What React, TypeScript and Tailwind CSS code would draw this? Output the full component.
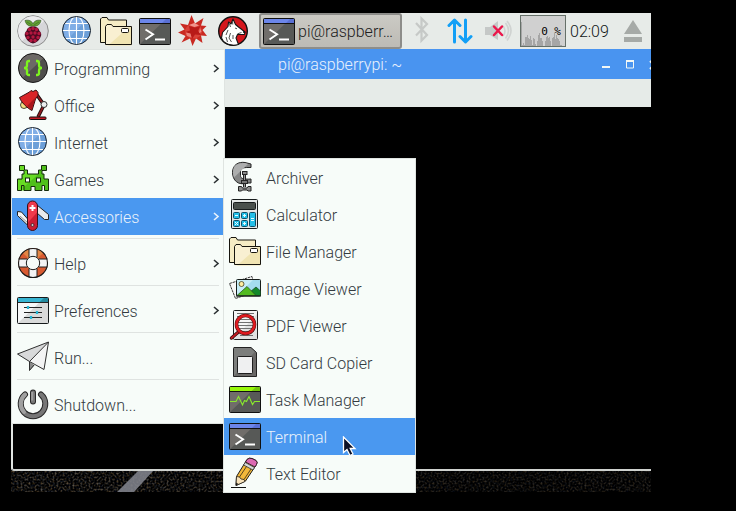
import type { ReactNode } from "react";

const FONT = "font-['Roboto','Noto_Sans',sans-serif]";

function Svg({ children }: { children: ReactNode }) {
  return (
    <svg viewBox="0 0 32 32" width="32" height="32" className="block shrink-0 overflow-visible">
      {children}
    </svg>
  );
}

function GlobeIcon() {
  return (
    <Svg>
      <circle cx="15.5" cy="15.5" r="14" fill="#6c9fd8" />
      <path d="M1.500 15.500A14 14 0 0 1 25 5.500L6 25Z" fill="#80aee6" />
      <g fill="none" stroke="#fff" strokeWidth="1.1">
        <ellipse cx="15.500" cy="15.500" rx="7.500" ry="14" />
        <path d="M15.500 1.500v28M1.500 15.500h28M4 8.500h23M4 23.500h23" />
      </g>
      <circle cx="15.5" cy="15.5" r="14" fill="none" stroke="#17202a" />
    </Svg>
  );
}

function FoldersIcon() {
  return (
    <Svg>
      <path d="M.5 27.500V4l1.500-1.500h5L8.500 5H26.500v22.500H1Z" fill="#f6ecc4" stroke="#17150e" />
      <path d="M5.500 30.500V11.500L7 9.500h5l1.500 2H31.500v17.500l-1 1Z" fill="#f9f0d2" />
      <path d="M8 30.500L29 12h2.500v18.500Z" fill="#f0e4b2" />
      <path d="M5.500 29.500V11.500L7 9.500h4.500l1.500 2H31.500V29.500Z" fill="none" stroke="#17150e" />
      <rect x="21.500" y="13.500" width="7" height="4" rx="1" fill="#fff" stroke="#17150e" />
    </Svg>
  );
}

function TerminalIcon() {
  return (
    <Svg>
      <rect x=".5" y="3.500" width="31" height="26" rx="1" fill="#575957" />
      <path d="M1 29L27 4H1Z" fill="#706d6a" />
      <path d="M1 4h30v5H1Z" fill="#5a70d4" />
      <path d="M1 4h26l-5 5H1Z" fill="#6c86ea" />
      <rect x=".5" y="3.500" width="31" height="26" rx="1" fill="none" stroke="#101010" />
      <path d="M1 8.500h30" stroke="#101010" />
      <path d="M6.500 14.500l7.500 4.700l-7.500 5.300" fill="none" stroke="#fff" strokeWidth="2" />
      <path d="M16 24.500h10" stroke="#fff" strokeWidth="2" />
    </Svg>
  );
}

function RaspberryIcon() {
  const drupelets = [
    [12.5, 14.5], [16, 13.5], [19.5, 14.5], [10, 18.5], [14, 18], [18, 18], [22, 18.5], [11, 22.5], [16, 22], [21, 22.5], [14, 25.5], [18, 25.5],
  ];
  return (
    <Svg>
      <circle cx="16" cy="16" r="15.300" fill="#d6d6d9" stroke="#8b8b8b" />
      <path d="M5 26A14.800 14.800 0 0 1 27 6Z" fill="#ececee" />
      <path d="M16 11C11 12 9 9 8 5.500C12 4.500 15 6 16 9C17 6 20 4.500 24 5.500C23 9 21 12 16 11Z" fill="#64a034" stroke="#2d4f1e" strokeWidth=".6" />
      <path d="M10 7l5 3M22 7l-5 3" stroke="#3b6a22" strokeWidth=".6" />
      <path d="M16 11.500C21 11.500 22 14 22.500 16C25 18 24.500 21 23 23C22 26 19 27.500 16 28.500C13 27.500 10 26 9 23C7.500 21 7 18 9.500 16C10 14 11 11.500 16 11.500Z" fill="#4d0a22" />
      {drupelets.map(([x, y]) => (
        <circle key={`${x}-${y}`} cx={x} cy={y} r="1.700" fill="#b3163f" />
      ))}
    </Svg>
  );
}

function SpikeyIcon() {
  return (
    <Svg>
      <path d="M13.500 0l3.500 8.500L25.500 3l-2.500 7.500l5.500 .5l-4 4L29 21l-6-.5L24.500 28l-6.500-4.500L14.500 31l-2.500-7.500L3.500 27.500l4-6.500L0 17.500L6.500 14.500L2 8.500l8 1.500Z" fill="#c92a22" />
      <path d="M10 10.500l6.500-2.500l6 3l1.500 5l-1 4.500l-5 3l-6-.5L7.500 20L7 14.500Z" fill="#d94138" />
      <path d="M11 11l6 1.500l5.500-1.500l-2.500 5l3 4l-6-.5l-3 4.500l-1.500-5l-5-2l4.500-1.500Z" fill="#b81a18" />
      <path d="M11 10l5.500-2l4.500 2.500l-4.500 1.500Z" fill="#f0958d" />
      <path d="M8 17.500l4.500 1l1 4l-4.500-1.500Z" fill="#e98078" />
      <path d="M22 13l1.500 4l-2.500 1Z" fill="#f08c84" />
    </Svg>
  );
}

function WolfIcon() {
  return (
    <Svg>
      <circle cx="16" cy="16" r="14.300" fill="#d4161c" stroke="#111" strokeWidth="1.400" />
      <path d="M16 4L18.500 9.500L21.500 12L28 17L27.500 19.500L20.500 19.500L19 23L21.500 29.500C16 31 10 29.500 6.500 26.500L4.500 23L5.500 17.500L11 11.500L11.500 7L14 9Z" fill="#fff" stroke="#161616" strokeWidth="1.100" strokeLinejoin="round" />
      <path d="M15.500 6.500l.3 3M12.500 9l1 3M18 13l2 .8M24.500 17.500l-4 1.300M11 15l-2 5M13.500 18l-1.500 5l2.500 4M16 20l0 4M9 22l1.500 5" fill="none" stroke="#222" strokeWidth=".8" />
      <path d="M26.500 15.500l2 1.500l-1 1.500l-1.500-1Z" fill="#171717" />
    </Svg>
  );
}

function ProgrammingIcon() {
  return (
    <Svg>
      <circle cx="16" cy="16" r="14.500" fill="#4f4e4c" />
      <path d="M5.500 26A14.500 14.500 0 0 1 26.500 6Z" fill="#6c6966" />
      <circle cx="16" cy="16" r="14.500" fill="none" stroke="#191919" />
      <path d="M13 9h-1q-2 0-2 2v2.500q0 2.500-3 2.500q3 0 3 2.500V21q0 2 2 2H13M19 9h1q2 0 2 2v2.500q0 2.500 3 2.500q-3 0-3 2.500V21q0 2-2 2H19" fill="none" stroke="#7df51e" strokeWidth="2.300" />
    </Svg>
  );
}

function OfficeIcon() {
  return (
    <Svg>
      <path d="M20 6l7 10l-6 12" fill="none" stroke="#1b0b0b" strokeWidth="3.500" />
      <path d="M20 6l7 10l-6 12" fill="none" stroke="#8e1b20" strokeWidth="1.700" />
      <circle cx="7" cy="16" r="3.500" fill="#f3df83" stroke="#242017" strokeWidth=".8" />
      <path d="M2.500 8.500L12.500 3L14 1.500L16 2.500L19 1l2 2.500v3L18.500 10L15 21.500C10 19 4 13 2.500 8.500Z" fill="#d92528" stroke="#351010" />
      <path d="M20.500 6.500L18 10L14.800 20.500L10 17Z" fill="#a9171d" />
      <circle cx="27" cy="15.500" r="3" fill="#eceff0" stroke="#333" />
      <rect x="12.500" y="28" width="16.500" height="2.500" rx=".8" fill="#c51a25" stroke="#190c0c" />
    </Svg>
  );
}

function GamesIcon() {
  const d =
    "M2.500 2.500h5v4.500h3v4h11v-4h3V2.500h5v5h-4.500v3.500h2v5h4.500v11.500h-4v-5h-2.500v5h-7v-4h-4v4h-7v-5h-2.500v5H.5V16h4.500v-5h2V7.500H2.500Z";
  return (
    <Svg>
      <path d={d} fill="#4fc01a" />
      <path d="M3 3h4v4h3v4.500h11L8 23H7v4.500H1V16.500h4.500v-5h2V7H3Z" fill="#68dc24" />
      <path d={d} fill="none" stroke="#152b0c" />
      <rect x="8.500" y="15" width="4" height="4" fill="#fff" stroke="#152b0c" />
      <rect x="19.500" y="15" width="4" height="4" fill="#fff" stroke="#152b0c" />
    </Svg>
  );
}

function KnifeIcon() {
  return (
    <Svg>
      <path d="M.5 11.500L4.500 12l7 8v6L.5 15.500Z" fill="#f5f5f5" stroke="#222" />
      <path d="M3 16l8 7" stroke="#999" />
      <path d="M20 5l11.500 9.500v5h-4L20 13Z" fill="#e8e9eb" stroke="#222" />
      <rect x="10.500" y="1" width="10" height="29.500" rx="5" fill="#ef3a4c" />
      <path d="M20.500 12L10.500 23v2.500a5 5 0 0 0 10 0Z" fill="#cb1d32" />
      <rect x="10.500" y="1" width="10" height="29.500" rx="5" fill="none" stroke="#351017" />
      <path d="M15.500 5v6M12.500 8h6" stroke="#fff" strokeWidth="2" />
      <circle cx="15.500" cy="25" r="1.500" fill="#c9c9c9" stroke="#3d1a20" strokeWidth=".8" />
    </Svg>
  );
}

function HelpIcon() {
  return (
    <Svg>
      <circle cx="16" cy="16" r="10.700" fill="none" stroke="#d95b31" strokeWidth="8" />
      <path d="M8.500 8.500A10.700 10.700 0 0 1 23.500 8.500" fill="none" stroke="#e38645" strokeWidth="8" />
      <path d="M12 2h8v8h-8ZM12 22h8v8h-8ZM2 12h8v8H2ZM22 12h8v8h-8Z" fill="#f3f3f3" />
      <path d="M12 1.500v8.500M20 1.500v8.500M12 22v8.500M20 22v8.500M1.500 12H10M1.500 20H10M22 12h8.500M22 20h8.500" stroke="#222" />
      <circle cx="16" cy="16" r="14.500" fill="none" stroke="#1c1c1c" strokeWidth="1.100" />
      <circle cx="16" cy="16" r="6.700" fill="#f7fcf9" stroke="#1c1c1c" />
    </Svg>
  );
}

function PreferencesIcon() {
  return (
    <Svg>
      <rect x=".5" y="3.500" width="31" height="26" rx="1" fill="#d9dada" />
      <path d="M1 29L27 4H1Z" fill="#f7f9f9" />
      <path d="M1 4h30v4.500H1Z" fill="#23899e" />
      <path d="M1 4h26l-5 4.500H1Z" fill="#37b5d2" />
      <rect x=".5" y="3.500" width="31" height="26" rx="1" fill="none" stroke="#15191b" />
      <path d="M1 8.500h30M7 13.500h18M7 18.500h18M7 23.500h18" stroke="#252525" />
      <path d="M11 12v3M20 17v3M14 22v3" stroke="#24b6d3" strokeWidth="2.300" />
    </Svg>
  );
}

function PlaneIcon() {
  return (
    <Svg>
      <path d="M.5 13L31.500 1L12 20.500Z" fill="#d8d9da" />
      <path d="M31.500 1L27 28.500L12.500 20.500Z" fill="#f3f4f4" />
      <path d="M12.500 20.500V29.500l5-5Z" fill="#898989" />
      <path d="M.5 13L31.500 1L27 28.500L12.500 20.500ZM31.500 1L12.500 20.500V29.500l4.500-5.500" fill="none" stroke="#303030" strokeLinejoin="round" />
    </Svg>
  );
}

function PowerIcon() {
  return (
    <Svg>
      <path d="M8 6.500A12.300 12.300 0 1 0 24 6.500" fill="none" stroke="#292929" strokeWidth="6" strokeLinecap="round" />
      <path d="M8 6.500A12.300 12.300 0 1 0 24 6.500" fill="none" stroke="#777777" strokeWidth="4" strokeLinecap="round" />
      <path d="M8 6.500A12.300 12.300 0 0 0 7 24" fill="none" stroke="#a0a0a0" strokeWidth="4" strokeLinecap="round" />
      <path d="M16 4.500v9" stroke="#292929" strokeWidth="6" strokeLinecap="round" />
      <path d="M16 4.500v9" stroke="#777" strokeWidth="4" strokeLinecap="round" />
      <path d="M15.200 4v8.500" stroke="#a0a0a0" strokeWidth="2" />
    </Svg>
  );
}

function ArchiverIcon() {
  return (
    <Svg>
      <path d="M22 3V6.500H19C14 6.500 11.500 7.500 11.500 10V14.500C11.500 17.500 14 18.500 22 18V22H18C9 25 3.500 19 3.500 11.500C3.500 3.500 10 .5 16 1.500Z" fill="#858686" stroke="#252525" />
      <path d="M4 11C4 4 9 1.500 16 2L19 3L5 16.500C4 14 4 13 4 11Z" fill="#adaeae" />
      <path d="M14.500 13v13M16.500 13v13" stroke="#252525" />
      <path d="M15.500 13v13" stroke="#999" />
      <rect x="13.500" y="10.500" width="4.500" height="3" fill="#8d8d8d" stroke="#252525" />
      <rect x="12.500" y="19.500" width="6" height="3" fill="#777" stroke="#252525" />
      <path d="M9.500 25.500h3l1 1.500h4.500l1-1.500h3v4.500h-3L18 29h-4.500l-1 1h-3Z" fill="#8d8d8d" stroke="#222" />
    </Svg>
  );
}

function CalculatorIcon() {
  return (
    <Svg>
      <rect x="2.500" y="1.500" width="26" height="29" rx="1" fill="#e5e8e8" stroke="#181c1d" />
      <rect x="4.500" y="4.500" width="22" height="7" rx="1" fill="#4a504d" stroke="#181c1d" />
      {[4.5, 12.5].map((x) =>
        [14.5, 22.5].map((y) => (
          <rect key={`${x}-${y}`} x={x} y={y} width="6" height="6" rx="1" fill="#23bfe9" stroke="#0e5069" />
        )),
      )}
      <rect x="20.500" y="14.500" width="6" height="14" rx="1" fill="#23bfe9" stroke="#0e5069" />
      <path d="M6 17.500h3M14 17.500h3M15.500 16v3M22 20.500h3M22 22.500h3M14 25.500h3M15.500 24v3M6 24l3 3M9 24l-3 3" stroke="#e9fcff" />
    </Svg>
  );
}

function ImageIcon() {
  return (
    <Svg>
      <path d="M.5 11.500L23 4.500l4 15L6.500 26.500Z" fill="#f7f7f7" stroke="#333" strokeDasharray="2.500 .7" />
      <rect x="7.500" y="7.500" width="24" height="16.500" rx="1" fill="#a4dcef" stroke="#171d1a" />
      <path d="M8 23.500L24 8H8Z" fill="#c7edf7" />
      <circle cx="12.500" cy="12" r="2.500" fill="#ffeda0" stroke="#454020" strokeWidth=".8" />
      <path d="M21 20l6-5l4.500 4v4.500H20Z" fill="#13892a" stroke="#164020" strokeWidth=".7" />
      <path d="M8 23.500l10-9l9 9Z" fill="#52ba21" stroke="#254a19" strokeWidth=".7" />
      <path d="M7 24h25" stroke="#171d1a" />
    </Svg>
  );
}

function PdfIcon() {
  return (
    <Svg>
      <rect x="4.500" y="1.500" width="24" height="29" rx="1" fill="#e0e1e1" />
      <path d="M5 30L28 5V2H5Z" fill="#f5f5f5" />
      <rect x="4.500" y="1.500" width="24" height="29" rx="1" fill="none" stroke="#202020" />
      <path d="M8 4.500h17M8 7.500h17M8 10.500h17M8 13.500h17M8 16.500h17M8 19.500h17M8 22.500h17M11 26.500h13" stroke="#707070" />
      <path d="M10 22.500L2.500 29" stroke="#371010" strokeWidth="3.500" strokeLinecap="round" />
      <path d="M10 22.500L2.500 29" stroke="#c31920" strokeWidth="1.700" strokeLinecap="round" />
      <circle cx="16.500" cy="15.500" r="9" fill="none" stroke="#5b1212" strokeWidth="3.600" />
      <circle cx="16.500" cy="15.500" r="9" fill="none" stroke="#e01a20" strokeWidth="2.500" />
    </Svg>
  );
}

function SdIcon() {
  return (
    <Svg>
      <path d="M4.500 1.500h17.500l5.500 5v24h-23Z" fill="#696866" />
      <path d="M5 30L26 5.500L22 2H5Z" fill="#7c7e7c" />
      <path d="M5 1.500h17l5.500 5v24h-23v-28Z" fill="none" stroke="#222" />
      <rect x="8.500" y="10.500" width="15" height="17" rx=".8" fill="#eff0f1" stroke="#1e1e1e" />
    </Svg>
  );
}

function TaskIcon() {
  return (
    <Svg>
      <rect x=".5" y="3.500" width="31" height="26" rx="1" fill="#575957" />
      <path d="M1 29L27 4H1Z" fill="#706d6a" />
      <path d="M1 4h30v4.500H1Z" fill="#73c50c" />
      <path d="M1 4h26l-5 4.500H1Z" fill="#98f80a" />
      <rect x=".5" y="3.500" width="31" height="26" rx="1" fill="none" stroke="#101010" />
      <path d="M1 8.500h30" stroke="#101010" />
      <path d="M1 18.500h6l2.500-5l4 8.500l2-4.500l2 1l2.500-5l3.500 8l2-3h5.500" fill="none" stroke="#8aeb2c" strokeWidth="1.100" />
    </Svg>
  );
}

function EditorIcon() {
  return (
    <Svg>
      <path d="M2 30.500h15" stroke="#111" />
      <path d="M7 28.500L7.500 19.500L18 2.500Q20 .500 23 1.500L27 3.500Q29 5 27.500 7.500L16.500 24Z" fill="#f2b83a" stroke="#231f19" />
      <path d="M18 2.500Q20 .500 23 1.500L27 3.500Q29 5 27.500 7.500L26 10L16.500 5Z" fill="#dc69b2" stroke="#37202b" />
      <path d="M16.300 5.500L25.500 10.500l-1.500 2.500L14.500 8Z" fill="#d6d9da" stroke="#333" strokeWidth=".8" />
      <path d="M7.500 19.500l3 .5l1.500 2l3 .5l1 2L7 28.500Z" fill="#f8e3bb" stroke="#26211a" strokeWidth=".8" />
      <path d="M10.500 20L17.500 9.500M15 22.500L22 12" stroke="#342815" strokeWidth=".8" />
      <path d="M7.300 25.500l2 1.500l-2.300 1.500Z" fill="#111" />
    </Svg>
  );
}

type Item = { label: string; icon: () => ReactNode };

const mainItems: (Item & { arrow?: boolean; separated?: boolean; active?: boolean })[] = [
  { label: "Programming", icon: ProgrammingIcon, arrow: true },
  { label: "Office", icon: OfficeIcon, arrow: true },
  { label: "Internet", icon: GlobeIcon, arrow: true },
  { label: "Games", icon: GamesIcon, arrow: true },
  { label: "Accessories", icon: KnifeIcon, arrow: true, active: true },
  { label: "Help", icon: HelpIcon, arrow: true, separated: true },
  { label: "Preferences", icon: PreferencesIcon, arrow: true, separated: true },
  { label: "Run...", icon: PlaneIcon, separated: true },
  { label: "Shutdown...", icon: PowerIcon, separated: true },
];

const subItems: Item[] = [
  { label: "Archiver", icon: ArchiverIcon },
  { label: "Calculator", icon: CalculatorIcon },
  { label: "File Manager", icon: FoldersIcon },
  { label: "Image Viewer", icon: ImageIcon },
  { label: "PDF Viewer", icon: PdfIcon },
  { label: "SD Card Copier", icon: SdIcon },
  { label: "Task Manager", icon: TaskIcon },
  { label: "Terminal", icon: TerminalIcon },
  { label: "Text Editor", icon: EditorIcon },
];

function MenuRow({ item, active, arrow }: { item: Item; active?: boolean; arrow?: boolean }) {
  const Icon = item.icon;
  return (
    <div className={`flex h-[37px] items-start pt-[2px] pl-[5px] ${active ? "bg-[#4a98f0] text-[#e9f2fb]" : "text-[#333a3f]"}`}>
      <Icon />
      <span className="ml-[5px] flex-1 text-[16px] leading-[36px] font-light whitespace-nowrap">{item.label}</span>
      {arrow && (
        <svg width="7" height="9" viewBox="0 0 7 9" className="mt-[12px] mr-[4px]">
          <path d="M1 1l4 3.500l-4 3.500" fill="none" stroke={active ? "#eaf3fc" : "#2d3235"} strokeWidth="1.600" />
        </svg>
      )}
    </div>
  );
}

const cpuBars = [24, 1, 3, 1, 9, 9, 11, 8, 7, 10, 6, 1, 8, 7, 2, 0, 5, 11, 13, 8, 8, 5, 0, 0, 5, 9, 10, 8, 9, 5, 0, 8, 9, 13, 7, 11, 8, 7, 5, 1, 1, 0, 0, 0];

function Panel() {
  return (
    <header className="flex h-9 items-start bg-[#e7ebe8] pt-[2px] pl-[6px]">
      <RaspberryIcon />
      <div className="ml-3 flex gap-[7px]">
        <GlobeIcon />
        <FoldersIcon />
        <TerminalIcon />
        <SpikeyIcon />
        <WolfIcon />
      </div>
      <div className="-mt-[2px] ml-[10px] flex h-9 w-[143px] shrink-0 items-start rounded-[3px] border-2 border-[#8d8d8a] bg-gradient-to-b from-[#cbcac4] to-[#bdbbb5] pl-[2px] text-[#202020]">
        <TerminalIcon />
        <span className="ml-[3px] text-[16px] leading-[33px] font-light whitespace-nowrap">pi@raspberr…</span>
      </div>
      <svg width="16" height="28" viewBox="0 0 16 28" className="mt-[1px] ml-[12px] shrink-0">
        <path d="M2 7l11 12l-5.500 5.500V2.500L13 8L2 19.500" fill="none" stroke="#c6c9c7" strokeWidth="2.200" />
      </svg>
      <svg width="26" height="26" viewBox="0 0 26 26" className="mt-[3px] ml-[17px] shrink-0">
        <path d="M7.500 24V3M2 7.500l5.500-5.500l5.500 5.500M18.500 2v21M13 18.500l5.500 5.500l5.500-5.500" fill="none" stroke="#129ff6" strokeWidth="3" strokeLinecap="round" strokeLinejoin="round" />
      </svg>
      <svg width="28" height="24" viewBox="0 0 28 24" className="mt-[4px] ml-[12px] shrink-0">
        <path d="M0 8h5l8-6v19l-8-5H0Z" fill="#c5c8c7" />
        <path d="M18 7q4 5 0 10M20.500 4q6 7.500 0 15.500M22 2q8 9.500 0 19.500" fill="none" stroke="#d0d3d1" strokeWidth="1.600" />
        <path d="M9 7.500l8 8.500M17 7.500l-8 8.500" stroke="#eb174b" strokeWidth="2.500" strokeLinecap="round" />
      </svg>
      <div className="relative ml-[7px] h-8 w-[46px] shrink-0 border border-[#667069] bg-[#d0d0d0]">
        <svg width="44" height="30" viewBox="0 0 44 30">
          {cpuBars.map((height, i) => (
            <rect key={i} x={i} y={30 - height} width="1" height={height} fill="#a6a6a6" />
          ))}
        </svg>
        <span className="absolute top-[9px] right-[4px] font-['DejaVu_Sans_Mono',monospace] text-[11px] leading-[14px] whitespace-pre text-black">0 %</span>
      </div>
      <span className="ml-[4px] w-[40px] shrink-0 text-[16px] leading-[33px] font-light whitespace-nowrap text-[#101516]">02:09</span>
      <svg width="18" height="24" viewBox="0 0 18 24" className="mt-[5px] ml-[14px] shrink-0">
        <path d="M9 0l9 14H0ZM0 17h18v5H0Z" fill="#a6aaa7" />
      </svg>
    </header>
  );
}

function TerminalWindow() {
  return (
    <section className="flex flex-1 flex-col">
      <div className="flex h-[30px] items-center overflow-hidden bg-[#4994f0] pl-[267px] text-[#e8f1fd]">
        <span className="w-[324px] shrink-0 pt-[2px] text-[16px] leading-[24px] font-light">pi@raspberrypi: ~</span>
        <svg width="60" height="14" viewBox="0 0 60 14" className="shrink-0">
          <path d="M0 10h8" stroke="#f1f7f5" strokeWidth="2" />
          <path d="M24.500 4v7h7V4Z" fill="none" stroke="#f1f7f5" />
          <path d="M24 4h8M48 4l8 8M56 4l-8 8" stroke="#f1f7f5" strokeWidth="2" />
        </svg>
      </div>
      <div className="h-7 bg-[#e6ebe8]" />
      <div className="flex-1 rounded-bl-[3px] border-b-2 border-l-2 border-b-[#cfd2cf] border-l-[#e1e5e2] bg-black" />
    </section>
  );
}

function Wallpaper() {
  return (
    <svg width="640" height="21" viewBox="0 0 640 21" className="block">
      <defs>
        <filter id="gravel" x="0" y="0" width="100%" height="100%" colorInterpolationFilters="sRGB">
          <feTurbulence type="fractalNoise" baseFrequency="0.5" numOctaves="2" seed="8" />
          <feColorMatrix values=".9 0 0 0 -.39  .75 0 .1 0 -.365  .55 0 .25 0 -.34  0 0 0 0 1" />
        </filter>
        <linearGradient id="shade">
          <stop offset="0" stopColor="#000" stopOpacity="0" />
          <stop offset=".35" stopColor="#000" stopOpacity=".15" />
          <stop offset=".7" stopColor="#000" stopOpacity=".45" />
        </linearGradient>
      </defs>
      <rect width="640" height="21" filter="url(#gravel)" />
      <rect width="640" height="21" fill="url(#shade)" />
      <path d="M127 0h15L123 21h-17Z" fill="#858790" opacity=".85" />
    </svg>
  );
}

export default function App() {
  return (
    <main className={`h-[511px] w-[736px] overflow-hidden bg-black pt-[13px] pl-[11px] ${FONT}`}>
      <div className="relative flex h-[479px] w-[640px] flex-col">
        <Panel />
        <TerminalWindow />
        <Wallpaper />

        <nav className="absolute top-[36px] left-0 w-[214px] border border-[#dfe4e1] bg-[#f7fcf9]">
          {mainItems.map((item) => (
            <div key={item.label}>
              {item.separated && (
                <div className="h-[10px] px-[5px] pt-[3px]">
                  <div className="h-px bg-[#dfe3e1]" />
                </div>
              )}
              <MenuRow item={item} active={item.active} arrow={item.arrow} />
            </div>
          ))}
        </nav>

        <nav className="absolute top-[145px] left-[212px] w-[193px] border border-[#dfe4e1] bg-[#f7fcf9]">
          {subItems.map((item) => (
            <MenuRow key={item.label} item={item} active={item.label === "Terminal"} />
          ))}
        </nav>

        <svg width="16" height="22" viewBox="0 0 16 22" className="absolute top-[423px] left-[331px]">
          <path d="M1.500 1v15.500l3.500-3l3 6l3-1.500l-2.800-5.500H13Z" fill="#0c1026" stroke="#fff" strokeWidth="1.300" />
        </svg>
      </div>
    </main>
  );
}
